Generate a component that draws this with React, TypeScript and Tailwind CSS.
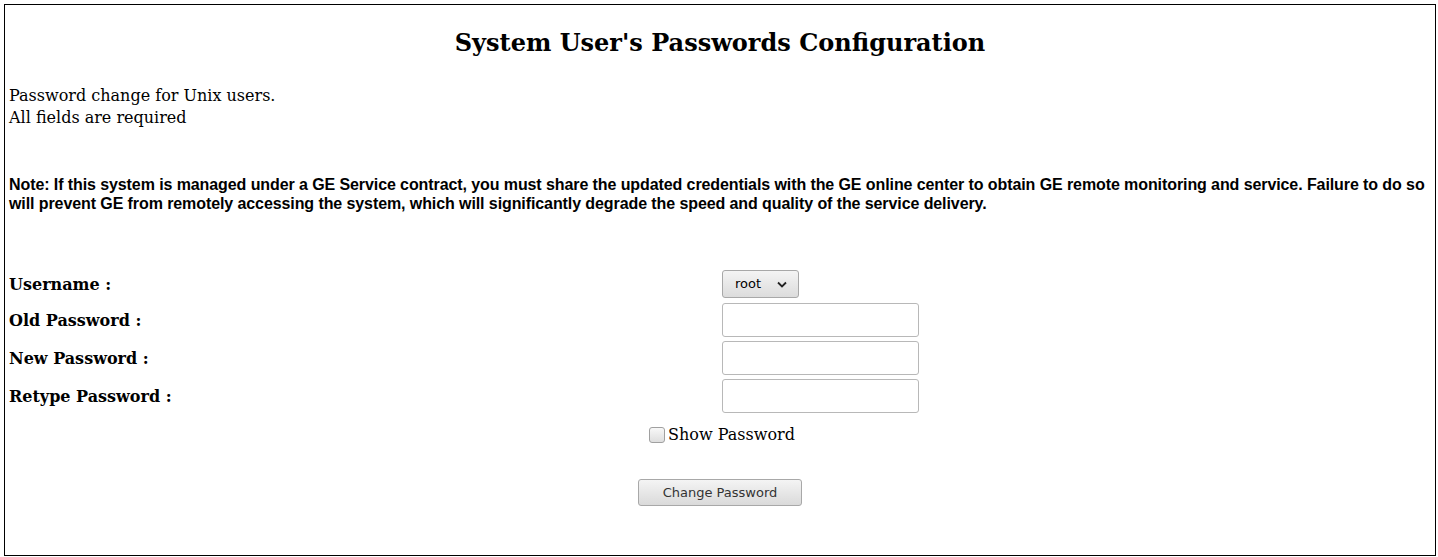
const serif = "font-['DejaVu_Serif',serif]";
const uiSans = "font-['DejaVu_Sans',sans-serif]";

const fields = ["Old Password :", "New Password :", "Retype Password :"];

export default function App() {
  return (
    <div className="bg-white p-1">
      <div className={`flex h-[552px] w-[1432px] flex-col border border-black px-1 text-black ${serif}`}>
        <h2 className="mt-[24px] h-[28px] text-center text-[24px] font-bold leading-[28px]">
          System User's Passwords Configuration
        </h2>

        <div className="mt-[28px] text-[16px] leading-[22px]">
          <div>Password change for Unix users.</div>
          <div>All fields are required</div>
        </div>

        <p className="mt-[46px] font-['Liberation_Sans',Arial,sans-serif] text-[16px] font-bold leading-[19px] tracking-[-0.09px]">
          Note: If this system is managed under a GE Service contract, you must share the updated credentials with
          the GE online center to obtain GE remote monitoring and service. Failure to do so will prevent GE from
          remotely accessing the system, which will significantly degrade the speed and quality of the service
          delivery.
        </p>

        <div className="mt-[57px] flex flex-col">
          <div className="flex h-[28px] items-center">
            <span className="w-[713px] pt-[2px] text-[16px] font-bold">Username :</span>
            <button
              type="button"
              className={`flex h-[28px] w-[77px] items-center gap-[16px] rounded-[3px] border border-[#a8a8a8] bg-[linear-gradient(180deg,#f4f4f4_0%,#dcdcdc_100%)] pl-3 text-[13px] text-black ${uiSans}`}
            >
              root
              <svg width="10" height="7" viewBox="0 0 10 7" fill="none" stroke="#222" strokeWidth="1.8">
                <path d="M1 1.5l4 4 4-4" />
              </svg>
            </button>
          </div>
          {fields.map((label, i) => (
            <div key={label} className={`flex h-[34px] items-center ${i === 0 ? "mt-[5px]" : "mt-[4px]"}`}>
              <span className="w-[713px] pt-[2px] text-[16px] font-bold">{label}</span>
              <input
                type="password"
                className="h-[34px] w-[197px] rounded-[3px] border border-[#b8b8b8] bg-white px-2 outline-none"
              />
            </div>
          ))}
        </div>

        <label className="mt-[11px] flex h-[22px] items-center pl-[640px] text-[16px]">
          <span className="mr-[3px] h-[16px] w-[16px] rounded-[3px] border border-[#a0a0a0] bg-[linear-gradient(180deg,#f8f8f8_0%,#dedede_100%)]" />
          Show Password
        </label>

        <div className="mt-[33px] flex justify-center">
          <button
            type="button"
            className={`h-[27px] w-[164px] rounded-[3px] border border-[#a8a8a8] bg-[linear-gradient(180deg,#f4f4f4_0%,#dadada_100%)] text-[13px] text-[#333] ${uiSans}`}
          >
            Change Password
          </button>
        </div>
      </div>
    </div>
  );
}
